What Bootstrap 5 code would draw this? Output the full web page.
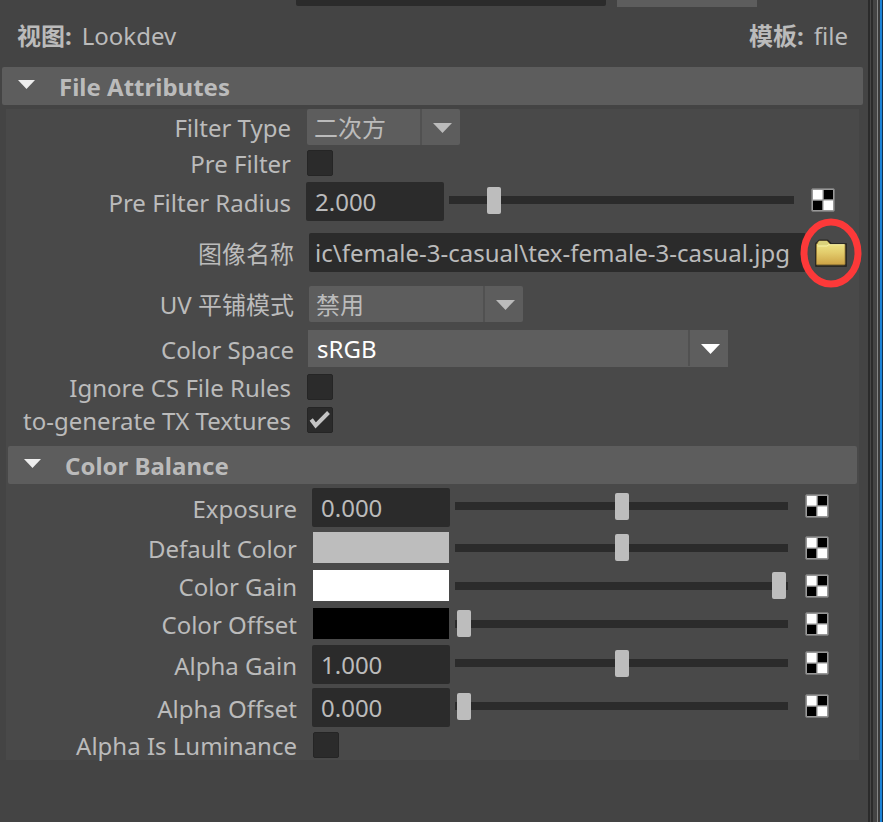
<!DOCTYPE html>
<html lang="zh-CN">
<head>
<meta charset="utf-8">
<meta name="viewport" content="width=device-width, initial-scale=1">
<title>Attribute Editor</title>
<link href="https://cdn.jsdelivr.net/npm/bootstrap@5.3.0/dist/css/bootstrap.min.css" rel="stylesheet">
<style>
  body { background: #444; color: #bbb; font-family: "Noto Sans", "Noto Sans CJK SC", sans-serif; font-size: 24px; line-height: 36px; }
  .cut-field { width: 310px; height: 6px; background: #2b2b2b; border-radius: 0 0 2px 2px; }
  .cut-button { width: 140px; height: 7px; background: #5d5d5d; margin-left: 11px; }
  .top-strip { height: 7px; padding-left: 296px; }
  .title-line { padding: 11px 20px 13px 17px; }
  .title-line strong { margin-right: 10px; }
  .section-head { height: 38px; padding: 2px 16px 0; gap: 24px; border: 0; border-radius: 2px; background: #5d5d5d; color: #bbb; font-weight: 700; text-align: left; }
  .section-head svg { margin-bottom: 5px; }
  .outer-section { padding: 0 5px 0 2px; }
  .panel { background: #494949; margin: 4px 4px 0 4px; padding-bottom: 2px; }
  .inner-section { padding: 0 2px; }
  .attr { padding: 0 24px 0 14px; }
  .attr.shifted { padding-left: 17px; }
  .inner-rows .attr { padding-left: 20px; padding-right: 30px; }
  .attr-label { flex: 0 0 271px; height: 36px; margin: -4px 15px -6px 0; display: flex; justify-content: flex-end; overflow: hidden; white-space: nowrap; }
  .below-5 { margin-bottom: 5px; }
  .below-6 { margin-bottom: 6px; }
  .below-7 { margin-bottom: 7px; }
  .below-12 { margin-bottom: 12px; }
  .below-13 { margin-bottom: 13px; }
  .below-14 { margin-bottom: 14px; }
  .field { height: 39px; border: 0; border-radius: 2px; background: #2b2b2b; color: #bbb; padding: 0 9px; min-width: 0; }
  .field.num { flex: 0 0 138px; width: 138px; }
  .field.path { padding: 0 6px; margin-right: 5px; }
  .tick { appearance: none; width: 26px; height: 26px; margin: 0 0 0 1px; border: 1px solid #252525; border-radius: 2px; background: #2b2b2b; }
  .tick:checked { background: #2b2b2b url("data:image/svg+xml,%3Csvg xmlns='http://www.w3.org/2000/svg' viewBox='0 0 24 24'%3E%3Cpath d='M3.200 11.500L7.700 17.500L20.500 4.500' fill='none' stroke='%23c4c4c4' stroke-width='4'/%3E%3C/svg%3E") center / 24px 24px no-repeat; }
  .combo { appearance: none; height: 36px; border: 0; border-radius: 2px; color: #bbb; padding: 2px 46px 0 7px; line-height: 34px;
    background: url("data:image/svg+xml,%3Csvg xmlns='http://www.w3.org/2000/svg' width='40' height='36'%3E%3Cpath d='M0 0h2v36H0z' fill='%23515151'/%3E%3Cpath d='M13 14h19l-9.500 10z' fill='%23bbb'/%3E%3C/svg%3E") right top / 40px 36px no-repeat #5d5d5d; }
  .combo.short { width: 153px; margin-left: 1px; }
  .combo.medium { width: 214px; }
  .combo.long { flex: 0 1 420px; height: 37px; border-radius: 0; color: #fff; padding: 0 46px 0 9px; margin-left: -1px;
    background: url("data:image/svg+xml,%3Csvg xmlns='http://www.w3.org/2000/svg' width='40' height='36'%3E%3Cpath d='M0 0h2v36H0z' fill='%23515151'/%3E%3Cpath d='M13 14h19l-9.500 10z' fill='%23fff'/%3E%3C/svg%3E") right top / 40px 36px no-repeat #5e5e5e; }
  .slider-part { gap: 17px; margin-left: 5px; min-width: 0; }
  .num + .slider-part { margin-bottom: 3px; }
  .slider { appearance: none; flex: 1 1 0; min-width: 0; height: 27px; margin: 0; padding: 0 2px; border-radius: 2px; background: linear-gradient(#2b2b2b, #2b2b2b) center / 100% 8px no-repeat; }
  .slider::-webkit-slider-thumb { appearance: none; width: 14px; height: 27px; border-radius: 2px; background: #bdbdbd; }
  .slider::-moz-range-thumb { width: 14px; height: 27px; border: 0; border-radius: 2px; background: #bdbdbd; }
  .swatch { flex: 0 0 136px; width: 136px; height: 31px; margin: 0 1px; border: 0; padding: 0; }
  .swatch.grey { background: #bdbdbd; }
  .swatch.white { background: #fff; }
  .swatch.black { background: #000; }
  .icon-btn { border: 0; padding: 0; background: none; line-height: 0; flex: none; }
  .folder-btn { margin: 0 -13px 0 3px; }
  .ring { position: absolute; left: 50%; top: 50%; transform: translate(-50%, -50%); pointer-events: none; }
  .edge { flex: 0 0 15px; background: linear-gradient(90deg, #2b2b2b 2px, #484848 2px 3px, #2b2b2b 3px 5px, #444 5px 9px, #858585 9px 10px, #3a3a3a 10px 12px, #1b82d6 12px 14px, #12304c 14px); }
</style>
<script src="https://cdn.jsdelivr.net/npm/bootstrap@5.3.0/dist/js/bootstrap.bundle.min.js"></script>
</head>
<body>
<svg class="d-none" aria-hidden="true">
  <symbol id="map" viewBox="0 0 24 24">
    <rect x=".5" y=".5" width="23" height="23" rx="1.500" fill="#999" stroke="#777"/>
    <rect x="2" y="2" width="20" height="20" fill="#fff"/>
    <path d="M12.500 2H22v9.500h-9.500zM2 12.500h9.500V22H2z" fill="#000"/>
    <path d="M12 2v20M2 12h20" stroke="#777" stroke-width=".8"/>
  </symbol>
  <symbol id="fold" viewBox="0 0 17 9"><path d="M0 0h17L8.500 9z" fill="#eee"/></symbol>
</svg>
<div class="d-flex min-vh-100">
  <main class="flex-grow-1">
    <div class="top-strip d-flex"><div class="cut-field"></div><div class="cut-button"></div></div>
    <div class="title-line d-flex justify-content-between">
      <div><strong>视图:</strong>Lookdev</div>
      <div><strong>模板:</strong>file</div>
    </div>
    <section class="outer-section">
      <button class="section-head w-100 d-flex align-items-center" type="button"><svg width="17" height="9"><use href="#fold"/></svg>File Attributes</button>
      <div class="panel">
        <div class="attr d-flex align-items-center below-5"><label class="attr-label" for="ftype">Filter Type</label><select class="combo short" id="ftype"><option>二次方</option></select></div>
        <div class="attr d-flex align-items-center below-6"><label class="attr-label" for="pre">Pre Filter</label><input class="tick" type="checkbox" id="pre"></div>
        <div class="attr d-flex align-items-center below-12"><label class="attr-label" for="radius">Pre Filter Radius</label><input class="field num" id="radius" value="2.000">
          <div class="slider-part d-flex flex-grow-1 align-items-center"><input class="slider" type="range" value="11" aria-label="Pre Filter Radius"><button class="icon-btn" type="button" aria-label="Map"><svg width="24" height="24"><use href="#map"/></svg></button></div></div>
        <div class="attr shifted d-flex align-items-center below-14"><label class="attr-label" for="image">图像名称</label><input class="field path flex-grow-1" id="image" value="ic\female-3-casual\tex-female-3-casual.jpg">
          <button class="icon-btn folder-btn position-relative" type="button" aria-label="Browse">
            <svg width="34" height="30" viewBox="0 0 34 30">
              <defs><linearGradient id="gold" x1="0" y1="0" x2="0" y2="1"><stop offset="0" stop-color="#f0ea8c"/><stop offset=".5" stop-color="#e2cb6b"/><stop offset="1" stop-color="#cda345"/></linearGradient></defs>
              <path d="M1 28V6Q1 4.500 2.500 4L4 2.500Q4.500 1.500 6 1.500h7q1.500 0 2 1l2.500 2.500H32q1 0 1 1v22q0 1-1 1H2q-1 0-1-1z" fill="#24231f" opacity=".85"/>
              <path d="M2.500 26V6.500l2.500-3.500h8l3.500 3.500H31V26q0 .8-.8.800H3.300q-.8 0-.8-.8z" fill="url(#gold)" stroke="#9d7e35" stroke-width=".8"/>
              <path d="M4 5.200L5.500 3h7.300l2.200 2.400-2 2.100H4z" fill="#dad27b"/><path d="M3.500 8h9.500l1.800-1.300H30.500" fill="none" stroke="#f7f2a8"/>
            </svg>
            <svg class="ring" width="62" height="70" viewBox="0 0 62 70"><ellipse cx="31" cy="35" rx="27" ry="31" fill="none" stroke="#fc3939" stroke-width="7"/></svg>
          </button></div>
        <div class="attr shifted d-flex align-items-center mb-2"><label class="attr-label" for="uv">UV 平铺模式</label><select class="combo medium" id="uv"><option>禁用</option></select></div>
        <div class="attr shifted d-flex align-items-center below-7"><label class="attr-label" for="space">Color Space</label><select class="combo long" id="space"><option>sRGB</option></select></div>
        <div class="attr d-flex align-items-center below-7"><label class="attr-label" for="ignore">Ignore CS File Rules</label><input class="tick" type="checkbox" id="ignore"></div>
        <div class="attr d-flex align-items-center below-13"><label class="attr-label" for="tx">to-generate TX Textures</label><input class="tick" type="checkbox" id="tx" checked></div>
        <section class="inner-section"><button class="section-head w-100 d-flex align-items-center" type="button"><svg width="17" height="9"><use href="#fold"/></svg>Color Balance</button></section>
        <div class="inner-rows pt-1">
          <div class="attr d-flex align-items-center below-5"><label class="attr-label" for="exp">Exposure</label><input class="field num" id="exp" value="0.000">
            <div class="slider-part d-flex flex-grow-1 align-items-center"><input class="slider" type="range" value="50" aria-label="Exposure"><button class="icon-btn" type="button" aria-label="Map"><svg width="24" height="24"><use href="#map"/></svg></button></div></div>
          <div class="attr d-flex align-items-center below-7"><label class="attr-label" for="dc">Default Color</label><button class="swatch grey" id="dc" type="button"></button>
            <div class="slider-part d-flex flex-grow-1 align-items-center"><input class="slider" type="range" value="50" aria-label="Default Color"><button class="icon-btn" type="button" aria-label="Map"><svg width="24" height="24"><use href="#map"/></svg></button></div></div>
          <div class="attr d-flex align-items-center below-7"><label class="attr-label" for="cg">Color Gain</label><button class="swatch white" id="cg" type="button"></button>
            <div class="slider-part d-flex flex-grow-1 align-items-center"><input class="slider" type="range" value="100" aria-label="Color Gain"><button class="icon-btn" type="button" aria-label="Map"><svg width="24" height="24"><use href="#map"/></svg></button></div></div>
          <div class="attr d-flex align-items-center below-6"><label class="attr-label" for="co">Color Offset</label><button class="swatch black" id="co" type="button"></button>
            <div class="slider-part d-flex flex-grow-1 align-items-center"><input class="slider" type="range" value="0" aria-label="Color Offset"><button class="icon-btn" type="button" aria-label="Map"><svg width="24" height="24"><use href="#map"/></svg></button></div></div>
          <div class="attr d-flex align-items-center mb-1"><label class="attr-label" for="ag">Alpha Gain</label><input class="field num" id="ag" value="1.000">
            <div class="slider-part d-flex flex-grow-1 align-items-center"><input class="slider" type="range" value="50" aria-label="Alpha Gain"><button class="icon-btn" type="button" aria-label="Map"><svg width="24" height="24"><use href="#map"/></svg></button></div></div>
          <div class="attr d-flex align-items-center below-5"><label class="attr-label" for="ao">Alpha Offset</label><input class="field num" id="ao" value="0.000">
            <div class="slider-part d-flex flex-grow-1 align-items-center"><input class="slider" type="range" value="0" aria-label="Alpha Offset"><button class="icon-btn" type="button" aria-label="Map"><svg width="24" height="24"><use href="#map"/></svg></button></div></div>
          <div class="attr d-flex align-items-center"><label class="attr-label" for="lum">Alpha Is Luminance</label><input class="tick" type="checkbox" id="lum"></div>
        </div>
      </div>
    </section>
  </main>
  <div class="edge"></div>
</div>
</body>
</html>
